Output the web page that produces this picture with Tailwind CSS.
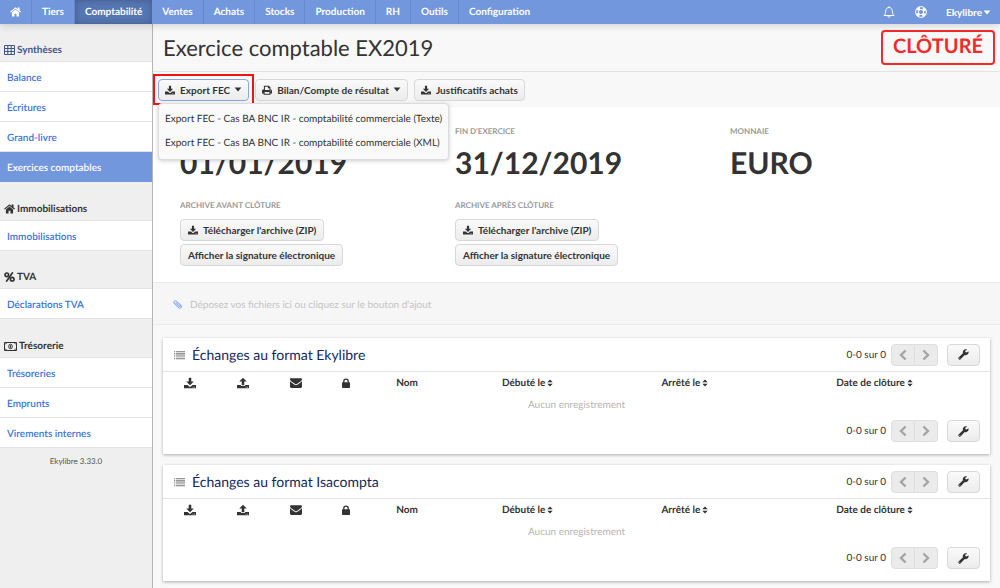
<!DOCTYPE html>
<html lang="fr">
<head>
<meta charset="utf-8">
<meta name="viewport" content="width=device-width, initial-scale=1">
<title>Exercice comptable EX2019 - Ekylibre</title>
<script src="https://cdn.jsdelivr.net/npm/@tailwindcss/browser@4"></script>
</head>
<body class="flex min-h-screen flex-col bg-[#f8f8f8] font-['Lato',sans-serif] text-[10px] leading-4 text-[#333] [text-rendering:geometricPrecision]">
<svg class="hidden" aria-hidden="true">
  <symbol id="home" viewBox="0 0 16 14"><path d="M8 3.4 13.2 7.8V13a.7.7 0 0 1-.7.7H9.4V9.6H6.6v4.1H3.5a.7.7 0 0 1-.7-.7V7.8zM15.6 6.9l-.5.6c-.1.2-.4.2-.5.1L8 2.1 1.400 7.600c-.2.1-.4.1-.5-.1l-.5-.6c-.1-.2-.1-.4.1-.5L7.200.7c.5-.4 1.200-.4 1.700 0l2.300 1.900V.9c0-.2.2-.4.4-.4h1.900c.2 0 .4.2.4.4v3.800l2 1.700c.1.1.1.4-.3.5z"/></symbol>
  <symbol id="download" viewBox="0 0 16 16"><path d="M6.300 1h3.400v5h3.300L8 11 3 6h3.300zM0 10.500h4.800L6.600 12.300a2 2 0 0 0 2.800 0l1.800-1.800H16V15H0zm11.500 2.500v1h1v-1zm2 0v1h1v-1z" fill-rule="evenodd"/></symbol>
  <symbol id="upload" viewBox="0 0 16 16"><path d="M6.300 11h3.400V6H13L8 1 3 6h3.300zM0 10.500h5.200V12h5.600v-1.500H16V15H0zm11.500 2.500v1h1v-1zm2 0v1h1v-1z" fill-rule="evenodd"/></symbol>
  <symbol id="print" viewBox="0 0 16 16"><path d="M3 1h8l2.500 2.500V7H14a2 2 0 0 1 2 2v4.500h-2.500V15.500h-11V13.500H0V9a2 2 0 0 1 2-2h1zM4.700 2.700V8h7.100V5H9.500V2.700zM4.200 11.200v2.600h7.600v-2.600zM13 8.600v1.200h1.300V8.600z" fill-rule="evenodd"/></symbol>
  <symbol id="caret" viewBox="0 0 10 6"><path d="M.8.5h8.400L5 5.500z"/></symbol>
  <symbol id="mail" viewBox="0 0 16 13"><path d="M1.500 0h13A1.500 1.500 0 0 1 16 1.500c0 1-.7 1.900-1.500 2.500L9.600 7.500c-.5.400-1.100.8-1.600.8s-1.100-.4-1.600-.8L1.500 4C.9 3.600 0 2.500 0 1.600A1.500 1.500 0 0 1 1.500 0zM0 4.300c.3.300.6.6 1 .8l4.600 3.300c.7.500 1.500 1.100 2.400 1.100s1.700-.6 2.400-1.100L15 5.100c.4-.2.7-.5 1-.8v7.200a1.500 1.500 0 0 1-1.500 1.500h-13A1.500 1.500 0 0 1 0 11.500z"/></symbol>
  <symbol id="lock" viewBox="0 0 12 15"><path d="M1.700 6.500V5a4.300 4.300 0 0 1 8.600 0v1.500h.7c.6 0 1 .4 1 1V14c0 .6-.4 1-1 1H1c-.6 0-1-.4-1-1V7.500c0-.6.400-1 1-1zm2 0h4.600V5a2.300 2.300 0 0 0-4.600 0z" fill-rule="evenodd"/></symbol>
  <symbol id="list" viewBox="0 0 12 10"><path d="M0 .5h1.200v1H0zM2 .5h10v1H2zM0 2.500h1.200v1H0zM2 2.500h10v1H2zM0 4.500h1.200v1H0zM2 4.500h10v1H2zM0 6.500h1.200v1H0zM2 6.500h10v1H2zM0 8.500h1.200v1H0zM2 8.500h10v1H2z"/></symbol>
  <symbol id="sort" viewBox="0 0 6 8"><path d="M.3 3.300h5.400L3 .4zM.3 4.700h5.400L3 7.600z"/></symbol>
  <symbol id="prev" viewBox="0 0 8 12"><path d="M6.600 1.500 2 6l4.600 4.500" fill="none" stroke="currentColor" stroke-width="2.400"/></symbol>
  <symbol id="next" viewBox="0 0 8 12"><path d="M1.400 1.500 6 6l-4.600 4.500" fill="none" stroke="currentColor" stroke-width="2.400"/></symbol>
  <symbol id="wrench" viewBox="0 0 16 16"><path d="M14.900 3.700 12.300 5.200 10.600 4.200V2.500L13.200 1C12.600.6 12 .5 11.400.5A4.400 4.400 0 0 0 7.200 6.200L.9 12.500a1.500 1.500 0 0 0 0 2.100l.5.500a1.500 1.500 0 0 0 2.100 0L9.800 8.800a4.400 4.400 0 0 0 5.700-4.100c0-.4 0-1.200-.6-1zM2.700 12.700a.7.7 0 1 1 0 1.400.7.7 0 0 1 0-1.400z" fill-rule="evenodd"/></symbol>
</svg>

<header class="relative z-10 flex h-6 shrink-0 bg-[#7297dd] font-bold text-white shadow-[0_1px_8px_rgba(0,0,0,0.18)]">
  <nav class="flex flex-1 whitespace-nowrap" aria-label="Navigation principale">
    <a href="#" aria-label="Accueil" class="flex w-8 items-center justify-center border-r border-[#6789cc]"><svg class="h-[10px] w-[11px] fill-current"><use href="#home"/></svg></a>
    <a href="#" class="flex items-center border-r border-[#6789cc] px-[10px]">Tiers</a>
    <a href="#" class="flex items-center bg-[#5676b2] px-[10px] shadow-[inset_0_0_6px_rgba(0,0,0,0.25)]">Comptabilité</a>
    <a href="#" class="flex items-center border-r border-[#6789cc] px-[10px]">Ventes</a>
    <a href="#" class="flex items-center border-r border-[#6789cc] px-[10px]">Achats</a>
    <a href="#" class="flex items-center border-r border-[#6789cc] px-[10px]">Stocks</a>
    <a href="#" class="flex items-center border-r border-[#6789cc] px-[10px]">Production</a>
    <a href="#" class="flex items-center border-r border-[#6789cc] px-[10px]">RH</a>
    <a href="#" class="flex items-center border-r border-[#6789cc] px-[10px]">Outils</a>
    <a href="#" class="flex items-center px-[10px]">Configuration</a>
  </nav>
  <div class="flex items-center pr-[9px]">
    <button type="button" aria-label="Notifications" class="mr-5"><svg class="h-3 w-3" viewBox="0 0 12 12" fill="none" stroke="currentColor"><path d="M6 .3v1M1 9.500C2.500 8 2.600 6.500 2.700 5c.1-2.200 1.400-3.500 3.300-3.500S9.200 2.800 9.300 5c.1 1.500.2 3 1.700 4.500zM4.900 10.300c.2 1.300 2 1.300 2.200 0"/></svg></button>
    <button type="button" aria-label="Aide" class="mr-[19px]"><svg class="h-3 w-3" viewBox="0 0 12 12" fill="none" stroke="currentColor"><circle cx="6" cy="6" r="5.400"/><circle cx="6" cy="6" r="2.600"/><circle cx="6" cy="6" r="4" stroke-width="3" stroke-dasharray="3.140 3.140" stroke-dashoffset="-1.570"/></svg></button>
    <button type="button" class="flex items-center gap-px font-bold">Ekylibre<svg class="h-[5px] w-2 fill-current"><use href="#caret"/></svg></button>
  </div>
</header>

<div class="flex flex-1">
  <aside class="w-[153px] shrink-0 border-r border-[#b5b5b5] bg-[#efefef] font-bold">
    <h2 class="flex h-[38px] items-end gap-[2px] border-b border-[#e2e2e2] pb-[3px] pl-1 text-[#3f5788]"><svg class="mb-[3px] h-[10px] w-[11px]" viewBox="0 0 11 10" fill="none" stroke="currentColor"><path d="M.5.500h10v9H.5zM.5 3.500h10M.5 6.500h10M3.800.5v9M7.200.5v9"/></svg>Synthèses</h2>
    <ul class="bg-white font-semibold text-[#3d74d6]">
      <li><a href="#" class="flex h-[30px] items-center border-b border-[#e2e2e2] px-[7px] pt-[2px]">Balance</a></li>
      <li><a href="#" class="flex h-[30px] items-center border-b border-[#e2e2e2] px-[7px] pt-[2px]">Écritures</a></li>
      <li><a href="#" class="flex h-[30px] items-center border-b border-[#e2e2e2] px-[7px] pt-[2px]">Grand-livre</a></li>
      <li><a href="#" aria-current="page" class="flex h-[30px] items-center bg-[#7297dd] px-[7px] pt-[2px] text-white">Exercices comptables</a></li>
    </ul>
    <h2 class="flex h-[39px] items-end gap-[2px] border-b border-[#e2e2e2] pb-[3px] pl-1"><svg class="mb-[3px] h-[10px] w-[11px] fill-current"><use href="#home"/></svg>Immobilisations</h2>
    <ul class="bg-white font-semibold text-[#3d74d6]">
      <li><a href="#" class="flex h-[30px] items-center border-b border-[#e2e2e2] px-[7px] pt-[2px]">Immobilisations</a></li>
    </ul>
    <h2 class="flex h-[38px] items-end gap-[2px] border-b border-[#e2e2e2] pb-[3px] pl-1"><svg class="mb-[3px] h-[10px] w-[11px]" viewBox="0 0 11 10" fill="none" stroke="currentColor" stroke-width="1.700"><circle cx="2.800" cy="2.800" r="1.800"/><circle cx="8.200" cy="7.200" r="1.800"/><path d="M8.800.3 2.200 9.700"/></svg>TVA</h2>
    <ul class="bg-white font-semibold text-[#3d74d6]">
      <li><a href="#" class="flex h-[30px] items-center border-b border-[#e2e2e2] px-[7px] pt-[2px]">Déclarations TVA</a></li>
    </ul>
    <h2 class="flex h-[39px] items-end gap-[2px] border-b border-[#e2e2e2] pb-[3px] pl-1"><svg class="mb-[3px] h-[9px] w-[13px]" viewBox="0 0 13 9" fill="none" stroke="currentColor"><path d="M.5.500h12v8H.5z"/><path d="M1 2.500 2.500 1M10.500 1 12 2.500M1 6.500 2.500 8M10.500 8 12 6.500"/><ellipse cx="6.500" cy="4.500" rx="1.800" ry="2.300"/><path d="M6.500 3.200v2.600"/></svg>Trésorerie</h2>
    <ul class="bg-white font-semibold text-[#3d74d6]">
      <li><a href="#" class="flex h-[30px] items-center border-b border-[#e2e2e2] px-[7px] pt-[2px]">Trésoreries</a></li>
      <li><a href="#" class="flex h-[30px] items-center border-b border-[#e2e2e2] px-[7px] pt-[2px]">Emprunts</a></li>
      <li><a href="#" class="flex h-[30px] items-center border-b border-[#e2e2e2] px-[7px] pt-[2px]">Virements internes</a></li>
    </ul>
    <p class="pt-[5px] text-center text-[8px] font-normal text-[#555]">Ekylibre 3.33.0</p>
  </aside>

  <main class="min-w-0 flex-1">
    <div class="flex h-12 items-center justify-between border-b border-[#e4e4e4] pr-[5px] pl-[10px]">
      <h1 class="text-[22px] leading-8">Exercice comptable EX2019</h1>
      <span class="flex h-[35px] items-center rounded border-2 border-[#f22a2a] px-[10px] pb-1 text-[20px] leading-7 font-bold text-[#f22a2a]">CLÔTURÉ</span>
    </div>

    <div class="flex h-[35px] items-center gap-[6px] pl-[5px] whitespace-nowrap">
      <div class="relative">
        <button type="button" aria-expanded="true" class="flex h-[22px] items-center rounded-sm border border-[#86a7e0] bg-linear-to-b from-[#fafafa] to-[#ececec] px-[6px] font-bold"><svg class="mr-[5px] h-[10px] w-[10px] fill-current"><use href="#download"/></svg>Export FEC<svg class="ml-[4px] h-[5px] w-2 fill-current"><use href="#caret"/></svg></button>
        <span class="pointer-events-none absolute -inset-x-[5px] -top-[5px] -bottom-[4px] border-2 border-[#f01313]"></span>
        <ul class="absolute top-[24px] left-0 z-10 flex h-[57px] flex-col justify-around rounded-sm border border-[#dcdcdc] bg-[#fafafa] px-[6px] py-1 shadow-[0_1px_4px_rgba(0,0,0,0.2)]">
          <li><a href="#">Export FEC - Cas BA BNC IR - comptabilité commerciale (Texte)</a></li>
          <li><a href="#">Export FEC - Cas BA BNC IR - comptabilité commerciale (XML)</a></li>
        </ul>
      </div>
      <button type="button" class="flex h-[22px] items-center rounded-sm border border-[#d8d8d8] bg-linear-to-b from-[#fafafa] to-[#ececec] px-[6px] font-bold"><svg class="mr-[5px] h-[10px] w-[10px] fill-current"><use href="#print"/></svg>Bilan/Compte de résultat<svg class="ml-[4px] h-[5px] w-2 fill-current"><use href="#caret"/></svg></button>
      <button type="button" class="flex h-[22px] items-center rounded-sm border border-[#d8d8d8] bg-linear-to-b from-[#fafafa] to-[#ececec] px-[6px] font-bold"><svg class="mr-[5px] h-[10px] w-[10px] fill-current"><use href="#download"/></svg>Justificatifs achats</button>
    </div>

    <section class="grid grid-cols-3 gap-x-[5px] bg-white pt-4 pb-4 pl-[27px]">
      <div>
        <h3 class="text-[8px] font-bold text-[#999]">DÉBUT D'EXERCICE</h3>
        <p class="mt-1 text-[30px] leading-10 font-bold">01/01/2019</p>
      </div>
      <div>
        <h3 class="text-[8px] font-bold text-[#999]">FIN D'EXERCICE</h3>
        <p class="mt-1 text-[30px] leading-10 font-bold">31/12/2019</p>
      </div>
      <div>
        <h3 class="text-[8px] font-bold text-[#999]">MONNAIE</h3>
        <p class="mt-1 text-[30px] leading-10 font-bold">EURO</p>
      </div>
      <div class="mt-[14px] flex flex-col items-start gap-[3px]">
        <h3 class="mb-[3px] text-[8px] font-bold text-[#999]">ARCHIVE AVANT CLÔTURE</h3>
        <button type="button" class="flex h-[22px] items-center rounded-sm border border-[#d8d8d8] bg-linear-to-b from-[#fafafa] to-[#ececec] px-[7px] font-bold"><svg class="mr-[5px] h-[10px] w-[10px] fill-current"><use href="#download"/></svg>Télécharger l'archive (ZIP)</button>
        <button type="button" class="flex h-[22px] items-center rounded-sm border border-[#d8d8d8] bg-linear-to-b from-[#fafafa] to-[#ececec] px-[7px] font-bold">Afficher la signature électronique</button>
      </div>
      <div class="mt-[14px] flex flex-col items-start gap-[3px]">
        <h3 class="mb-[3px] text-[8px] font-bold text-[#999]">ARCHIVE APRÈS CLÔTURE</h3>
        <button type="button" class="flex h-[22px] items-center rounded-sm border border-[#d8d8d8] bg-linear-to-b from-[#fafafa] to-[#ececec] px-[7px] font-bold"><svg class="mr-[5px] h-[10px] w-[10px] fill-current"><use href="#download"/></svg>Télécharger l'archive (ZIP)</button>
        <button type="button" class="flex h-[22px] items-center rounded-sm border border-[#d8d8d8] bg-linear-to-b from-[#fafafa] to-[#ececec] px-[7px] font-bold">Afficher la signature électronique</button>
      </div>
    </section>

    <div class="flex h-[43px] items-center gap-2 border-y border-[#ebebeb] bg-[#f6f6f6] pt-[2px] pl-5 text-[#c4c4c4]">
      <svg class="h-[9px] w-[9px] text-[#8fb0ec]" viewBox="0 0 16 16" fill="none" stroke="currentColor" stroke-width="1.800"><path d="m4.500 4.500 6.500 6.500c1.500 1.500 3.300-.5 2-1.900L6 2.100C3.500-.2-.3 3 2 5.700l8 8c3 2.500 6.700-1 4.300-4L9 4.500"/></svg>
      <span>Déposez vos fichiers ici ou cliquez sur le bouton d'ajout</span>
    </div>

    <div class="flex flex-col gap-[11px] pt-[13px] pr-[10px] pb-[7px] pl-[10px]">
      <section class="bg-white shadow-[0_1px_3px_rgba(0,0,0,0.3)]">
        <div class="flex h-[34px] items-center border-b border-[#e4e4e4] pr-[10px] pl-[11px]">
          <svg class="mr-[7px] h-[10px] w-[11px] fill-[#777]"><use href="#list"/></svg>
          <h2 class="flex-1 text-[14px] leading-5 text-[#12295c]">Échanges au format Ekylibre</h2>
          <span class="mr-[5px]">0-0 sur 0</span>
          <button type="button" disabled aria-label="Page précédente" class="flex h-[22px] w-6 items-center justify-center rounded-l-sm border border-[#dedede] bg-[#ebebeb] text-[#a5a5a5]"><svg class="h-3 w-2"><use href="#prev"/></svg></button>
          <button type="button" disabled aria-label="Page suivante" class="mr-[9px] flex h-[22px] w-[23px] items-center justify-center rounded-r-sm border border-l-0 border-[#dedede] bg-[#ebebeb] text-[#a5a5a5]"><svg class="h-3 w-2"><use href="#next"/></svg></button>
          <button type="button" aria-label="Réglages" class="flex h-[22px] w-[33px] items-center justify-center rounded-sm border border-[#d8d8d8] bg-linear-to-b from-[#fafafa] to-[#ececec]"><svg class="h-[11px] w-[11px] fill-current"><use href="#wrench"/></svg></button>
        </div>
        <table class="w-full table-fixed">
          <colgroup><col class="w-[53px]"><col class="w-[53px]"><col class="w-[54px]"><col class="w-[46px]"><col class="w-[76px]"><col class="w-[20%]"><col class="w-[18%]"><col></colgroup>
          <thead><tr class="h-[22px]">
            <th scope="col" aria-label="Télécharger"><svg class="mx-auto h-3 w-3 fill-current"><use href="#download"/></svg></th>
            <th scope="col" aria-label="Envoyer"><svg class="mx-auto h-3 w-3 fill-current"><use href="#upload"/></svg></th>
            <th scope="col" aria-label="Courriel"><svg class="mx-auto h-[10px] w-3 fill-current"><use href="#mail"/></svg></th>
            <th scope="col" aria-label="Verrou"><svg class="mx-auto h-[10px] w-2 fill-current"><use href="#lock"/></svg></th>
            <th scope="col">Nom</th>
            <th scope="col">Débuté le<svg class="ml-[2px] inline h-2 w-[6px] fill-current"><use href="#sort"/></svg></th>
            <th scope="col">Arrêté le<svg class="ml-[2px] inline h-2 w-[6px] fill-current"><use href="#sort"/></svg></th>
            <th scope="col">Date de clôture<svg class="ml-[2px] inline h-2 w-[6px] fill-current"><use href="#sort"/></svg></th>
          </tr></thead>
          <tbody><tr class="h-[22px]"><td colspan="8" class="text-center text-[#b5b5b5]">Aucun enregistrement</td></tr></tbody>
        </table>
        <div class="flex h-[38px] items-start justify-end pt-1 pr-[10px]">
          <span class="mr-[5px] leading-[22px]">0-0 sur 0</span>
          <button type="button" disabled aria-label="Page précédente" class="flex h-[22px] w-6 items-center justify-center rounded-l-sm border border-[#dedede] bg-[#ebebeb] text-[#a5a5a5]"><svg class="h-3 w-2"><use href="#prev"/></svg></button>
          <button type="button" disabled aria-label="Page suivante" class="mr-[9px] flex h-[22px] w-[23px] items-center justify-center rounded-r-sm border border-l-0 border-[#dedede] bg-[#ebebeb] text-[#a5a5a5]"><svg class="h-3 w-2"><use href="#next"/></svg></button>
          <button type="button" aria-label="Réglages" class="flex h-[22px] w-[33px] items-center justify-center rounded-sm border border-[#d8d8d8] bg-linear-to-b from-[#fafafa] to-[#ececec]"><svg class="h-[11px] w-[11px] fill-current"><use href="#wrench"/></svg></button>
        </div>
      </section>

      <section class="bg-white shadow-[0_1px_3px_rgba(0,0,0,0.3)]">
        <div class="flex h-[34px] items-center border-b border-[#e4e4e4] pr-[10px] pl-[11px]">
          <svg class="mr-[7px] h-[10px] w-[11px] fill-[#777]"><use href="#list"/></svg>
          <h2 class="flex-1 text-[14px] leading-5 text-[#12295c]">Échanges au format Isacompta</h2>
          <span class="mr-[5px]">0-0 sur 0</span>
          <button type="button" disabled aria-label="Page précédente" class="flex h-[22px] w-6 items-center justify-center rounded-l-sm border border-[#dedede] bg-[#ebebeb] text-[#a5a5a5]"><svg class="h-3 w-2"><use href="#prev"/></svg></button>
          <button type="button" disabled aria-label="Page suivante" class="mr-[9px] flex h-[22px] w-[23px] items-center justify-center rounded-r-sm border border-l-0 border-[#dedede] bg-[#ebebeb] text-[#a5a5a5]"><svg class="h-3 w-2"><use href="#next"/></svg></button>
          <button type="button" aria-label="Réglages" class="flex h-[22px] w-[33px] items-center justify-center rounded-sm border border-[#d8d8d8] bg-linear-to-b from-[#fafafa] to-[#ececec]"><svg class="h-[11px] w-[11px] fill-current"><use href="#wrench"/></svg></button>
        </div>
        <table class="w-full table-fixed">
          <colgroup><col class="w-[53px]"><col class="w-[53px]"><col class="w-[54px]"><col class="w-[46px]"><col class="w-[76px]"><col class="w-[20%]"><col class="w-[18%]"><col></colgroup>
          <thead><tr class="h-[22px]">
            <th scope="col" aria-label="Télécharger"><svg class="mx-auto h-3 w-3 fill-current"><use href="#download"/></svg></th>
            <th scope="col" aria-label="Envoyer"><svg class="mx-auto h-3 w-3 fill-current"><use href="#upload"/></svg></th>
            <th scope="col" aria-label="Courriel"><svg class="mx-auto h-[10px] w-3 fill-current"><use href="#mail"/></svg></th>
            <th scope="col" aria-label="Verrou"><svg class="mx-auto h-[10px] w-2 fill-current"><use href="#lock"/></svg></th>
            <th scope="col">Nom</th>
            <th scope="col">Débuté le<svg class="ml-[2px] inline h-2 w-[6px] fill-current"><use href="#sort"/></svg></th>
            <th scope="col">Arrêté le<svg class="ml-[2px] inline h-2 w-[6px] fill-current"><use href="#sort"/></svg></th>
            <th scope="col">Date de clôture<svg class="ml-[2px] inline h-2 w-[6px] fill-current"><use href="#sort"/></svg></th>
          </tr></thead>
          <tbody><tr class="h-[22px]"><td colspan="8" class="text-center text-[#b5b5b5]">Aucun enregistrement</td></tr></tbody>
        </table>
        <div class="flex h-[38px] items-start justify-end pt-1 pr-[10px]">
          <span class="mr-[5px] leading-[22px]">0-0 sur 0</span>
          <button type="button" disabled aria-label="Page précédente" class="flex h-[22px] w-6 items-center justify-center rounded-l-sm border border-[#dedede] bg-[#ebebeb] text-[#a5a5a5]"><svg class="h-3 w-2"><use href="#prev"/></svg></button>
          <button type="button" disabled aria-label="Page suivante" class="mr-[9px] flex h-[22px] w-[23px] items-center justify-center rounded-r-sm border border-l-0 border-[#dedede] bg-[#ebebeb] text-[#a5a5a5]"><svg class="h-3 w-2"><use href="#next"/></svg></button>
          <button type="button" aria-label="Réglages" class="flex h-[22px] w-[33px] items-center justify-center rounded-sm border border-[#d8d8d8] bg-linear-to-b from-[#fafafa] to-[#ececec]"><svg class="h-[11px] w-[11px] fill-current"><use href="#wrench"/></svg></button>
        </div>
      </section>
    </div>
  </main>
</div>
</body>
</html>
